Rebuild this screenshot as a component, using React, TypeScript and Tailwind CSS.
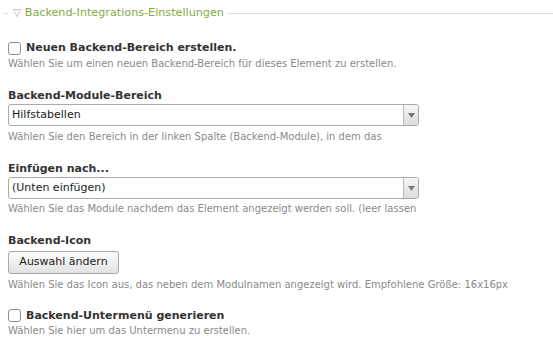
import { ReactNode } from 'react';

const font = { fontFamily: '"DejaVu Sans", Verdana, sans-serif' };

function Hint({ children }: { children: ReactNode }) {
  return <p className="text-[10px] leading-[13px] text-[#8a8a8a]">{children}</p>;
}

function Label({ children }: { children: ReactNode }) {
  return <div className="text-[11px] font-bold leading-[14px] text-[#333]">{children}</div>;
}

function Checkbox() {
  return <span className="inline-block h-[13px] w-[13px] shrink-0 rounded-[3px] border border-[#8e8e8e] bg-white" />;
}

function Select({ value }: { value: string }) {
  return (
    <div className="flex h-[22px] w-[411px] items-stretch rounded-[3px] border border-[#aaa] bg-white">
      <div className="flex flex-1 items-center px-[3px] text-[11px] text-[#222]">{value}</div>
      <div className="flex w-[15px] items-center justify-center rounded-r-[2px] border-l border-[#bbb] bg-gradient-to-b from-[#f6f6f6] to-[#dcdcdc]">
        <svg width="7" height="5" viewBox="0 0 7 5">
          <path d="M0 0h7L3.5 5z" fill="#777" />
        </svg>
      </div>
    </div>
  );
}

export default function App() {
  return (
    <div className="h-[360px] w-[553px] bg-white" style={font}>
      <div className="flex items-center pt-[6px]">
        <div className="ml-[4px] h-px w-[4px] bg-[#ddd]" />
        <span className="ml-[5px] text-[10px] leading-[14px] text-[#999]">▽</span>
        <span className="ml-[4px] text-[11.2px] leading-[14px] text-[#7fae3c]">Backend-Integrations-Einstellungen</span>
        <div className="ml-[4px] h-px flex-1 bg-[#ddd]" />
      </div>

      <div className="flex flex-col px-[8px] pt-[21px]">
        <div>
          <div className="flex items-center gap-[5px]">
            <Checkbox />
            <Label>Neuen Backend-Bereich erstellen.</Label>
          </div>
          <div className="mt-[2px]">
            <Hint>Wählen Sie um einen neuen Backend-Bereich für dieses Element zu erstellen.</Hint>
          </div>
        </div>

        <div className="mt-[19px]">
          <Label>Backend-Module-Bereich</Label>
          <div className="mt-[1px]">
            <Select value="Hilfstabellen" />
          </div>
          <div className="mt-[4px]">
            <Hint>Wählen Sie den Bereich in der linken Spalte (Backend-Module), in dem das</Hint>
          </div>
        </div>

        <div className="mt-[19px]">
          <Label>Einfügen nach...</Label>
          <div className="mt-[1px]">
            <Select value="(Unten einfügen)" />
          </div>
          <div className="mt-[3px]">
            <Hint>Wählen Sie das Module nachdem das Element angezeigt werden soll. (leer lassen</Hint>
          </div>
        </div>

        <div className="mt-[19px]">
          <Label>Backend-Icon</Label>
          <button className="mt-[1px] h-[23px] w-[111px] rounded-[3px] border border-[#aaa] bg-gradient-to-b from-[#fdfdfd] to-[#e2e2e2] text-[11px] text-[#222]">
            Auswahl ändern
          </button>
          <div className="mt-[4px]">
            <Hint>Wählen Sie das Icon aus, das neben dem Modulnamen angezeigt wird. Empfohlene Größe: 16x16px</Hint>
          </div>
        </div>

        <div className="mt-[18px]">
          <div className="flex items-center gap-[5px]">
            <Checkbox />
            <Label>Backend-Untermenü generieren</Label>
          </div>
          <div className="mt-[1px]">
            <Hint>Wählen Sie hier um das Untermenu zu erstellen.</Hint>
          </div>
        </div>
      </div>
    </div>
  );
}
